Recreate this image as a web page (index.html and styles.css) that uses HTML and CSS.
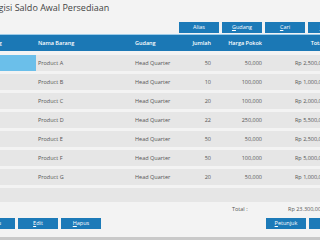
FILE: index.html
```html
<!DOCTYPE html>
<html lang="id">
<head>
  <meta charset="UTF-8">
  <title>Registrasi Saldo Awal Persediaan</title>
  <link rel="stylesheet" href="styles.css">
</head>
<body>

  <div class="app">
    <!-- Judul -->
    <div class="title">Regisi Saldo Awal Persediaan</div>

    <!-- Tombol atas -->
    <div class="toolbar">
      <button class="btn">Alias</button>
      <button class="btn"><u>G</u>udang</button>
      <button class="btn"><u>C</u>ari</button>
      <button class="btn"><u>K</u>eluar</button>
    </div>

    <!-- Tabel -->
    <div class="grid">
      <div class="row head">
        <div class="cell">Kode Barang</div>
        <div class="cell">Nama Barang</div>
        <div class="cell">Gudang</div>
        <div class="cell num">Jumlah</div>
        <div class="cell num">Harga Pokok</div>
        <div class="cell num total-head">Total</div>
      </div>

      <div class="rows">
        <div class="row">
          <div class="cell selected">BRG001</div>
          <div class="cell">Product A</div>
          <div class="cell">Head Quarter</div>
          <div class="cell num">50</div>
          <div class="cell num">50,000</div>
          <div class="cell num">Rp 2,500,000</div>
        </div>
        <div class="row">
          <div class="cell">BRG002</div>
          <div class="cell">Product B</div>
          <div class="cell">Head Quarter</div>
          <div class="cell num">10</div>
          <div class="cell num">100,000</div>
          <div class="cell num">Rp 1,000,000</div>
        </div>
        <div class="row">
          <div class="cell">BRG003</div>
          <div class="cell">Product C</div>
          <div class="cell">Head Quarter</div>
          <div class="cell num">20</div>
          <div class="cell num">100,000</div>
          <div class="cell num">Rp 2,000,000</div>
        </div>
        <div class="row">
          <div class="cell">BRG004</div>
          <div class="cell">Product D</div>
          <div class="cell">Head Quarter</div>
          <div class="cell num">22</div>
          <div class="cell num">250,000</div>
          <div class="cell num">Rp 5,500,000</div>
        </div>
        <div class="row">
          <div class="cell">BRG005</div>
          <div class="cell">Product E</div>
          <div class="cell">Head Quarter</div>
          <div class="cell num">50</div>
          <div class="cell num">50,000</div>
          <div class="cell num">Rp 2,500,000</div>
        </div>
        <div class="row">
          <div class="cell">BRG006</div>
          <div class="cell">Product F</div>
          <div class="cell">Head Quarter</div>
          <div class="cell num">50</div>
          <div class="cell num">100,000</div>
          <div class="cell num">Rp 5,000,000</div>
        </div>
        <div class="row">
          <div class="cell">BRG007</div>
          <div class="cell">Product G</div>
          <div class="cell">Head Quarter</div>
          <div class="cell num">20</div>
          <div class="cell num">50,000</div>
          <div class="cell num">Rp 1,000,000</div>
        </div>
        <div class="empty"></div>
      </div>
    </div>

    <!-- Total -->
    <div class="total-row">
      <span class="total-label">Total :</span>
      <span class="total-value">Rp 23.300,000</span>
    </div>

    <!-- Tombol bawah -->
    <div class="footer">
      <div class="group">
        <button class="btn"><u>B</u>aru</button>
        <button class="btn"><u>E</u>dit</button>
        <button class="btn"><u>H</u>apus</button>
      </div>
      <div class="group">
        <button class="btn"><u>P</u>etunjuk</button>
        <button class="btn"><u>T</u>utup</button>
      </div>
    </div>
  </div>

  <div class="bottom-edge"></div>

</body>
</html>
```

FILE: styles.css
```css
body {
  margin: 0;
  padding: 0;
  height: 240px;
  background: #f3f3f3;
  font-family: 'Open Sans', sans-serif;
  overflow: hidden;
  position: relative;
}

.app {
  width: 392px;
  margin-left: -34px;
}

.title {
  height: 16px;
  line-height: 16px;
  padding-left: 22px;
  font-size: 9px;
  color: #444;
}

.toolbar {
  display: flex;
  justify-content: flex-end;
  gap: 3px;
  padding-right: 10px;
  margin-top: 6px;
}

.btn {
  width: 40px;
  height: 11px;
  padding: 0;
  margin: 0;
  border: none;
  background: #1c7ab8;
  color: #fff;
  font-family: 'Open Sans', sans-serif;
  font-size: 5.5px;
  line-height: 11px;
}

.btn u { text-decoration: underline; }

.grid {
  margin-top: 1px;
}

.row {
  display: grid;
  grid-template-columns: 70px 97px 57px 23px 51px 66px;
  height: 16px;
  align-items: center;
  background: #e6e6e6;
  font-size: 5.5px;
  color: #555;
}

.cell {
  height: 100%;
  display: flex;
  align-items: center;
  padding: 0 2px;
  white-space: nowrap;
  overflow: hidden;
}

.cell.num { justify-content: flex-end; }

.row.head {
  background: #1b78b5;
  color: #fff;
  font-weight: 600;
  border-top: 1px solid #9ccbe8;
}

.total-head { padding-right: 6px; }

.cell.selected {
  background: #6bbfea;
  color: #6bbfea;
}

.rows {
  display: flex;
  flex-direction: column;
  gap: 3px;
  padding-top: 4px;
}

.empty {
  height: 14px;
  background: #e6e6e6;
}

.total-row {
  display: flex;
  height: 14px;
  align-items: center;
  padding-left: 266px;
  font-size: 5.5px;
  color: #555;
}

.total-label { width: 56px; }

.footer {
  display: flex;
  justify-content: space-between;
  padding: 2px 9px 0 9px;
}

.group {
  display: flex;
  gap: 3px;
}

.bottom-edge {
  position: absolute;
  left: 0;
  right: 0;
  bottom: 0;
  height: 3px;
  background: #c9c9c9;
}
```
